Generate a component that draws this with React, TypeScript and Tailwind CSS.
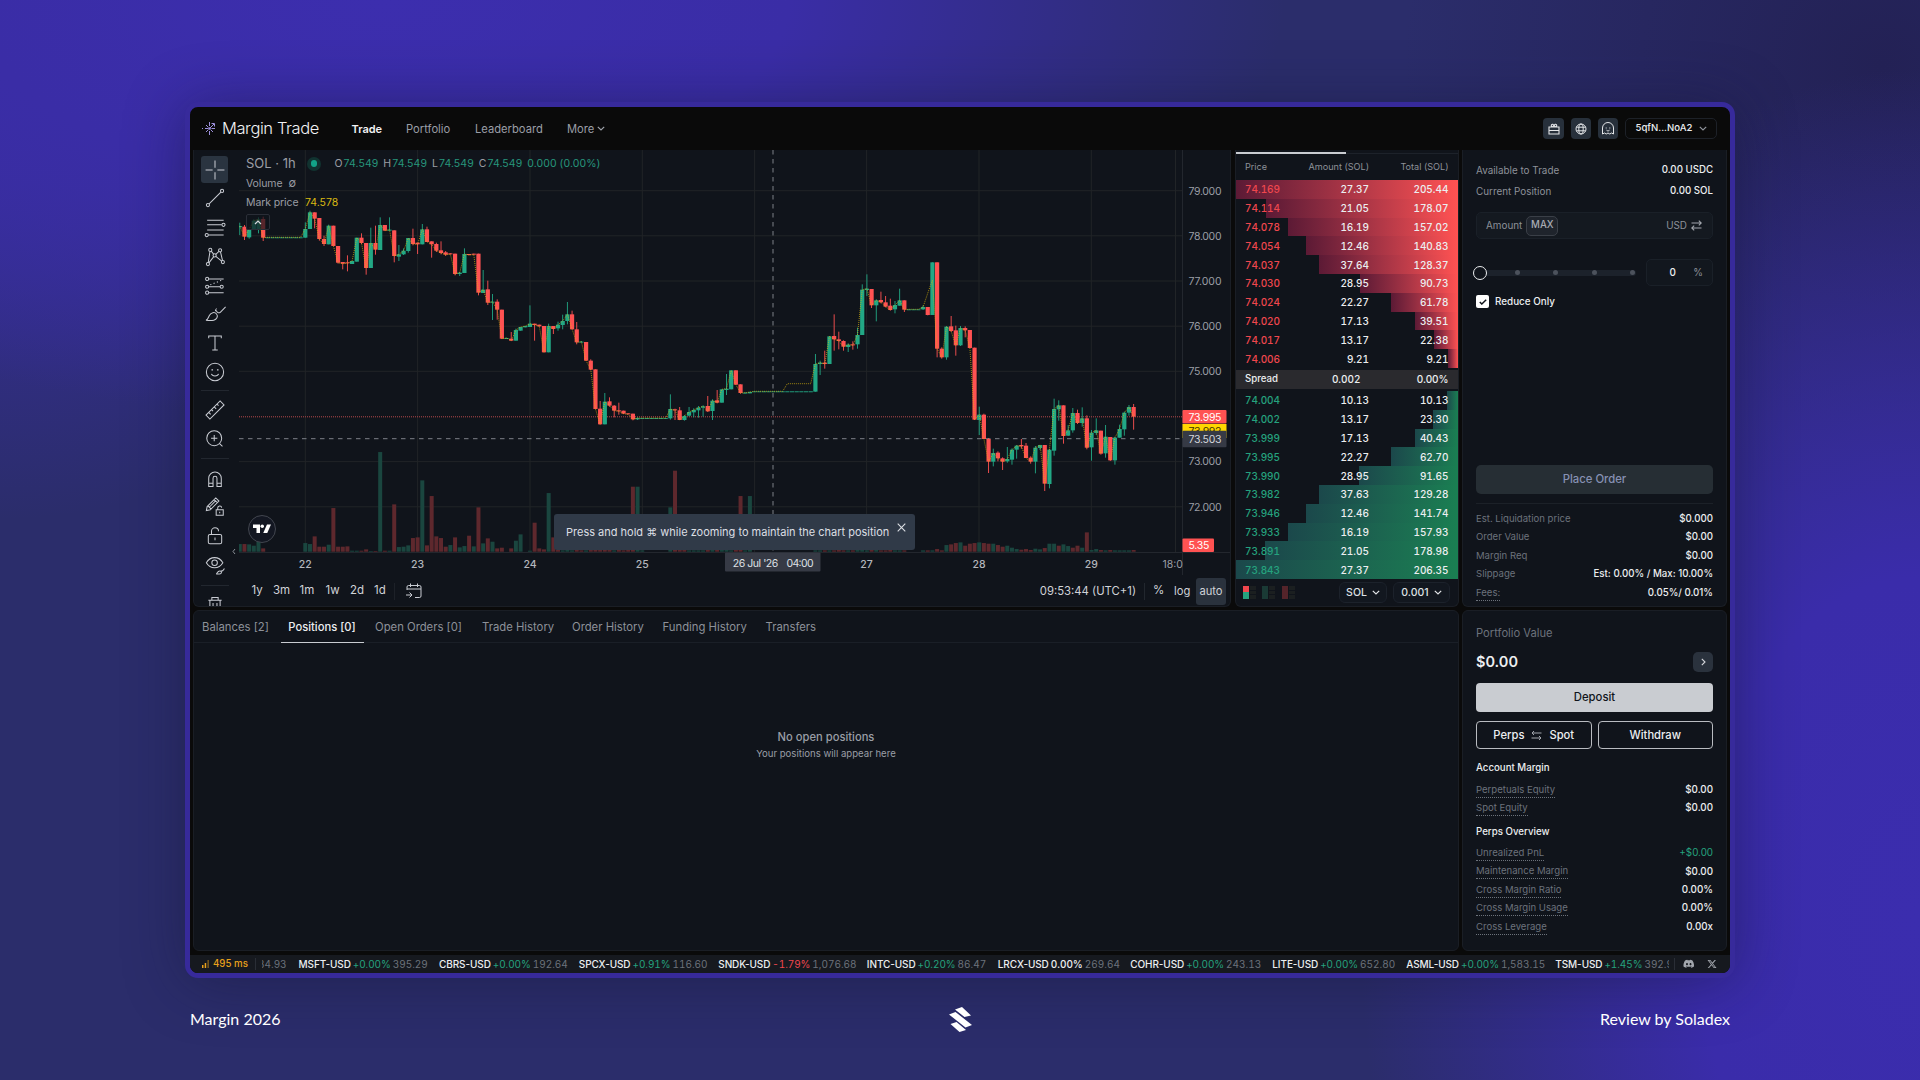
import type { ReactNode } from "react";
import { FaDiscord, FaXTwitter } from "react-icons/fa6";

// [open, close, high, low] as plot heights in thirds of a pixel, one entry per hour
type Bar = [number, number, number, number];

const PLOT_X = 66.3;
const STEP = 4.68;
const FIRST_SLOT = -14;

const flat = (y: number, count: number): Bar[] =>
  Array.from({ length: count }, () => [y, y, y, y] as Bar);

const shift = (bars: Bar[], by: number): Bar[] =>
  bars.map((b) => b.map((v) => v + by) as Bar);

const earlyBars: Bar[] = [
  [112, 108, 98, 135], [110, 140, 105, 150], [142, 118, 118, 146], [118, 92, 88, 118],
  [118, 88, 82, 130], [87, 143, 80, 153], ...flat(142, 8),
  [143, 117, 97, 143], [117, 67, 62, 117], [67, 86, 67, 115], [84, 147, 84, 152],
  [147, 162, 137, 168], [163, 107, 104, 163], [107, 168, 107, 168], [168, 218, 168, 221],
  [216, 221, 216, 238], [217, 220, 196, 244], [222, 213, 213, 222], [215, 143, 143, 215],
  [143, 159, 130, 162], [159, 234, 159, 254], [234, 159, 113, 234], [159, 179, 107, 194],
  [180, 105, 82, 180], [105, 122, 105, 122], [122, 119, 82, 122], [121, 198, 121, 217],
  [200, 193, 165, 213], [193, 182, 175, 195], [183, 144, 144, 188], [144, 162, 116, 166],
  [158, 163, 158, 192], [163, 118, 102, 163], [118, 156, 110, 156], [154, 163, 154, 203],
  [162, 182, 158, 186], [181, 189, 154, 193], [187, 194, 183, 198], [190, 193, 190, 193],
  [191, 252, 191, 256], [252, 248, 246, 258], [249, 192, 175, 249], [192, 195, 192, 196],
  [191, 194, 191, 195], [191, 308, 191, 316], [309, 299, 240, 309], [298, 338, 272, 345],
  [338, 335, 312, 390], [335, 359, 328, 389], [359, 446, 359, 447], [447, 444, 443, 447],
  [446, 452, 426, 453], [452, 420, 416, 452], [422, 411, 411, 422], [412, 408, 408, 412],
  [411, 401, 346, 411], [401, 405, 401, 452], [404, 409, 404, 410], [408, 487, 408, 487],
  [487, 408, 401, 487], [408, 417, 408, 432], [415, 404, 395, 422], [405, 393, 374, 418],
  [393, 373, 336, 403], [373, 418, 362, 418], [418, 457, 396, 463], [457, 455, 453, 457],
  [456, 512, 456, 513], [512, 539, 508, 541], [538, 657, 538, 658], [656, 703, 633, 703],
  [703, 635, 609, 703], [634, 647, 622, 650], [647, 662, 645, 682], [661, 664, 638, 674],
  [662, 671, 662, 672], [670, 673, 670, 673], [671, 688, 671, 691], [688, 684, 682, 690],
  ...flat(684, 6),
  [685, 657, 613, 689], [658, 661, 656, 690], [661, 690, 651, 690], [690, 678, 675, 692],
  [677, 666, 651, 679], [667, 660, 655, 682], [661, 653, 648, 683], [653, 649, 646, 680],
  [648, 664, 618, 666], [663, 632, 628, 690], [631, 638, 600, 640], [638, 598, 598, 638],
  [600, 596, 552, 615],
];

const lateBars: Bar[] = [
  [448, 391, 391, 448], [391, 434, 391, 434], [433, 459, 433, 461], [460, 458, 457, 460],
  [460, 456, 455, 460], ...flat(454, 13),
  [455, 372, 342, 455], [372, 368, 362, 405], [368, 372, 332, 386], [372, 289, 289, 372],
  [288, 298, 223, 332], [298, 303, 275, 328], [303, 320, 301, 332], [321, 314, 310, 336],
  [313, 316, 304, 329], [313, 285, 263, 326], [285, 149, 133, 285], [150, 146, 103, 168],
  [147, 196, 147, 204], [196, 181, 178, 244], [180, 187, 155, 190], [187, 200, 168, 202],
  [197, 210, 176, 212], [208, 195, 183, 220], [197, 181, 146, 197], [181, 209, 181, 216],
  ...flat(208, 3),
  [208, 201, 196, 210], [201, 225, 201, 226], [225, 67, 67, 225], [67, 326, 67, 352],
  [326, 352, 322, 356], [352, 260, 258, 359], [259, 273, 228, 276], [271, 316, 257, 347],
  [316, 264, 258, 318], [264, 271, 259, 292], [270, 324, 270, 324], [323, 539, 323, 540],
  [540, 524, 500, 585], [524, 597, 521, 597], [597, 665, 594, 699], [665, 639, 626, 679],
  [638, 655, 634, 664], [655, 665, 652, 690], [664, 657, 621, 668], [659, 629, 625, 674],
  [629, 617, 615, 656], [615, 619, 597, 626], [617, 654, 609, 654], [653, 665, 649, 671],
  [665, 623, 618, 700], [624, 615, 615, 630], [615, 731, 615, 753], [732, 629, 627, 745],
  [632, 507, 476, 647], [508, 496, 481, 542], [496, 588, 496, 611], [587, 571, 555, 588],
  [571, 519, 504, 578], [519, 549, 509, 552], [549, 535, 502, 560], [535, 623, 526, 628],
  [622, 578, 570, 662], [579, 571, 535, 585], [572, 641, 572, 644], [640, 590, 555, 653],
  [591, 661, 591, 663], [661, 593, 590, 674], [593, 567, 554, 593], [568, 518, 515, 587],
  [518, 501, 495, 527], [501, 530, 492, 569],
];

const bars = [...shift(earlyBars, 120), ...shift(lateBars, 270)];

// bar heights, negative on a down hour
const volumes = [
  23, -23, 22, 18, 30, -10, 0, 0, 0, 0, 0, 0, 0, 0,
  26, 23, -46, -15, -15, 21, -131, -15, -15, -16, 3, 3, -3, -7, 2, -2, 299, -3, 3, -142,
  14, 15, 19, -41, -43, 214, -19, -167, -46, -41, -15, 20, -43, 13, 17, -48, 16, -133, 25,
  -40, 30, -10, -12, 0, -10, 33, 52, 0, 3, -87, -10, -7, 176, -43, -5, 4, 5, 4, -5, -4, 4,
  -5, -6, -5, -8, -5, 4, -5, -4, -5, -195, 195, 4, 0, 0, 0, 0, 0, 133, -243, -5, -5, 4, 4,
  4, 4, -5, 5, -5, 5, 5, 4, -5, -167, 4, 167, 0, 0, 0, 0, 0, 0, 0, 0, 0, 0, 0, 0, 0, 4, 4,
  -4, 4, -4, -5, -4, 4, -4, 5, 5, 4, -5, 5, -4, -4, -5, 4, 4, -4, 0, 0, 0, 4, -4, 4, -8,
  -4, 20, -22, -26, 28, -18, -24, -26, 28, -26, -24, 24, -20, -15, 18, 12, 8, -6, -8, -5,
  9, 7, -11, 24, 24, -18, 22, 17, -12, -18, 12, -58, 5, 8, -5, 4, -5, 4, 4, 4, 4, -5,
];

const barX = (i: number) => PLOT_X + (i + FIRST_SLOT) * STEP;

const markPath = bars
  .map((b, i) => {
    const slot = i + FIRST_SLOT;
    let y = b[1];
    if (slot >= 103 && slot <= 108) y = 701;
    if (slot === 133) y = 430;
    if (slot === 134) y = 390;
    return `${i ? "L" : "M"}${barX(i).toFixed(1)} ${(y / 3).toFixed(1)}`;
  })
  .join("");

const priceTicks = [
  { label: "79.000", y: 40.7 },
  { label: "78.000", y: 85.8 },
  { label: "77.000", y: 131 },
  { label: "76.000", y: 176.2 },
  { label: "75.000", y: 221.3 },
  { label: "73.000", y: 311.6 },
  { label: "72.000", y: 356.8 },
];

const dayTicks = [
  { label: "22", x: 66.3 },
  { label: "23", x: 178.6 },
  { label: "24", x: 291 },
  { label: "25", x: 403.3 },
  { label: "", x: 515.6 },
  { label: "27", x: 627.6 },
  { label: "28", x: 740 },
  { label: "29", x: 852.3 },
];

const asks = [
  ["74.169", "27.37", "205.44"],
  ["74.114", "21.05", "178.07"],
  ["74.078", "16.19", "157.02"],
  ["74.054", "12.46", "140.83"],
  ["74.037", "37.64", "128.37"],
  ["74.030", "28.95", "90.73"],
  ["74.024", "22.27", "61.78"],
  ["74.020", "17.13", "39.51"],
  ["74.017", "13.17", "22.38"],
  ["74.006", "9.21", "9.21"],
];

const bids = [
  ["74.004", "10.13", "10.13"],
  ["74.002", "13.17", "23.30"],
  ["73.999", "17.13", "40.43"],
  ["73.995", "22.27", "62.70"],
  ["73.990", "28.95", "91.65"],
  ["73.982", "37.63", "129.28"],
  ["73.946", "12.46", "141.74"],
  ["73.933", "16.19", "157.93"],
  ["73.891", "21.05", "178.98"],
  ["73.843", "27.37", "206.35"],
];

const tickers = [
  { name: "MSFT-USD", change: "+0.00%", price: "395.29", width: "w-[140.500px]" },
  { name: "CBRS-USD", change: "+0.00%", price: "192.64", width: "w-[139.800px]" },
  { name: "SPCX-USD", change: "+0.91%", price: "116.60", width: "w-[139.500px]" },
  { name: "SNDK-USD", change: "-1.79%", price: "1,076.68", width: "w-[148.500px]" },
  { name: "INTC-USD", change: "+0.20%", price: "86.47", width: "w-[131px]" },
  { name: "LRCX-USD", change: "0.00%", price: "269.64", width: "w-[132.500px]" },
  { name: "COHR-USD", change: "+0.00%", price: "243.13", width: "w-[142px]" },
  { name: "LITE-USD", change: "+0.00%", price: "652.80", width: "w-[134px]" },
  { name: "ASML-USD", change: "+0.00%", price: "1,583.15", width: "w-[149px]" },
  { name: "TSM-USD", change: "+1.45%", price: "392.91", width: "w-[140px]" },
];

function ToolIcon({ children }: { children: ReactNode }) {
  return (
    <svg
      viewBox="0 0 28 28"
      className="h-[22px] w-[22px] shrink-0"
      fill="none"
      stroke="#c9ccd3"
      strokeWidth="1.3"
    >
      {children}
    </svg>
  );
}

function Tool({ children, className = "h-[29px]" }: { children: ReactNode; className?: string }) {
  return (
    <div className={`flex w-[27px] shrink-0 items-center justify-center ${className}`}>
      <ToolIcon>{children}</ToolIcon>
    </div>
  );
}

function DrawingTools() {
  return (
    <div className="flex h-full w-[45px] shrink-0 flex-col items-center overflow-hidden pt-[6px] pr-[4px]">
      <div className="flex h-[27px] w-[27px] shrink-0 items-center justify-center rounded-[3px] bg-[#2a3440]">
        <ToolIcon>
          <path d="M14 2v9M14 17v9M2 14h9M17 14h9" />
        </ToolIcon>
      </div>
      <Tool className="h-[30px]">
        <circle cx="5" cy="23" r="2" />
        <circle cx="23" cy="5" r="2" />
        <path d="M6.500 21.500l15-15" />
      </Tool>
      <Tool>
        <path d="M4 4h21M4 10h18.500M4 16.500h21M5.500 23h19.500" />
        <circle cx="24.800" cy="10" r="2" />
        <circle cx="3.500" cy="23" r="2" />
      </Tool>
      <Tool>
        <circle cx="5" cy="23" r="2" />
        <circle cx="8" cy="5" r="2" />
        <circle cx="13.500" cy="12" r="2" />
        <circle cx="20.500" cy="5.500" r="2" />
        <circle cx="24" cy="20.500" r="2" />
        <path d="M5.400 21L7.600 7M9.200 6.600l3 3.800M15 10.600l4-3.700M21 7.500l2.600 11M6.200 21.400l6-7.600M15 13.300l7.500 6" />
      </Tool>
      <Tool>
        <circle cx="4" cy="5" r="2" />
        <circle cx="4" cy="15" r="2" />
        <circle cx="4" cy="22.500" r="2" />
        <circle cx="22.500" cy="15" r="2" />
        <path d="M6 5h19M6 15h14.500M6 22.500h19" />
        <path d="M8 12.500L24 6" strokeDasharray="1.500 3" />
      </Tool>
      <Tool className="h-[28px]">
        <path d="M2.500 22c3-1 3-4 4.500-6.500 2-3.500 6.500-4.500 9-1.500 2.500 3.200 0 7-3.500 7.800-3 .7-7 .5-10 .2zM15.500 9.500c1 3.500 4 3.500 5.500 2L27.500 5M14.500 10.500c0-1.500.5-2.500 1.500-3.500" />
      </Tool>
      <Tool>
        <path d="M6 8V5h16v3M14 5v18M10.500 23h7" />
      </Tool>
      <Tool>
        <circle cx="14" cy="14" r="11" />
        <path d="M9.500 16.500c1 3.500 8 3.500 9 0" />
        <path d="M10.500 10.500v1.500M17.500 10.500v1.500" strokeWidth="2" />
      </Tool>
      <div className="my-[4px] h-px w-[28px] shrink-0 bg-[#22272f]" />
      <Tool className="h-[30px]">
        <path d="M2.500 20.500l18-18 5 5-18 18zM6 17l2.500 2.500M9.500 13.500L11.500 15.500M13 10l2.500 2.500M16.500 6.500L18.500 8.500" />
      </Tool>
      <Tool className="h-[28px]">
        <circle cx="13" cy="13" r="9.500" />
        <path d="M13 9v8M9 13h8M19.500 19.500l4 4" />
      </Tool>
      <div className="my-[5px] h-px w-[28px] shrink-0 bg-[#22272f]" />
      <Tool>
        <path d="M6 23.500V13a8 8 0 0 1 16 0v10.500h-5.500V13a2.500 2.500 0 0 0-5 0v10.500zM6 19.500h5.500M16.500 19.500H22" />
      </Tool>
      <Tool className="h-[28px]">
        <path d="M3 18.500l1-5 11-11 4 4-11 11zM13 4.500l4 4M5 12.500l4.200 4.200M7 14L15 6" />
        <path d="M15.500 17.500h9v7h-9zM17.500 17.500v-2a2.500 2.500 0 0 1 5-.5M20 20v2" />
      </Tool>
      <Tool className="h-[30px]">
        <rect x="5.500" y="12" width="17" height="12" rx="2" />
        <path d="M9.500 12V8a4.500 4.500 0 0 1 9 0M14 16v3.500" />
      </Tool>
      <Tool className="h-[28px]">
        <path d="M3 11C8 2.500 19 2.500 24 11 19 19.500 8 19.500 3 11z" />
        <circle cx="13.500" cy="11" r="3.500" />
        <path d="M15.500 25.500c1.500-.5 1.500-4 4.500-4s3 4-.5 4zM21.500 21c1 1.500 3 0 4.500-2.500" />
      </Tool>
      <div className="mt-[6px] mb-[8px] h-px w-[28px] shrink-0 bg-[#22272f]" />
      <Tool className="h-[22px]">
        <path d="M5.500 8h17M10 8V4.500h8V8M7.500 8v15h13V8M11.500 11.500v8M16.500 11.500v8" />
      </Tool>
    </div>
  );
}

function CandleChart() {
  return (
    <svg width="991" height="425" viewBox="0 0 991 425" className="block">
      <g stroke="#212427" strokeWidth="1">
        {priceTicks.map((t) => (
          <line key={t.label} x1="0" x2="943" y1={t.y} y2={t.y} />
        ))}
        {[...dayTicks, { label: "18", x: 936.5 }].map((t) => (
          <line key={t.x} x1={t.x} x2={t.x} y1="0" y2="402" />
        ))}
      </g>

      {volumes.map((v, i) => (
        <rect
          key={i}
          x={barX(i) - 2}
          y={401.7 - Math.abs(v) / 3}
          width="4"
          height={Math.abs(v) / 3}
          fill={v < 0 ? "#5e282d" : "#1a463f"}
        />
      ))}

      <line x1="0" x2="943" y1="266.800" y2="266.800" stroke="#b5484a" strokeDasharray="1 1" />
      <line x1="534" x2="534" y1="0" y2="402" stroke="#7d8088" strokeDasharray="4.500 4.500" />
      <line x1="0" x2="943" y1="288.700" y2="288.700" stroke="#7d8088" strokeDasharray="4.500 4.500" />

      {bars.map(([open, close, high, low], i) => {
        const fill = close <= open ? "#22a885" : "#ff5252";
        const top = Math.min(open, close) / 3;
        return (
          <g key={i} fill={fill}>
            <rect x={barX(i) - 0.45} y={high / 3} width="0.9" height={(low - high) / 3} />
            <rect
              x={barX(i) - 2.1}
              y={top}
              width="4.200"
              height={Math.max(0.9, Math.abs(open - close) / 3)}
            />
          </g>
        );
      })}
      <path d={markPath} fill="none" stroke="#d8b40e" strokeWidth="0.8" strokeDasharray="0.9 1.100" />

      <path d="M0 402.500H991M943.500 0V425" stroke="#23272e" />

      <g fill="#9b9ea5" fontSize="10.500" className="font-['Inter']">
        {priceTicks.map((t) => (
          <text key={t.label} x="949.500" y={t.y + 3.8} textLength="33">
            {t.label}
          </text>
        ))}
        {dayTicks.map((t) => (
          <text key={t.x} x={t.x} y="417.500" textAnchor="middle" fontWeight="500" fill="#b4b7bd">
            {t.label}
          </text>
        ))}
        <text x="923.500" y="417.500" fontSize="10.500">
          18:0
        </text>
      </g>

      <g fontSize="10.500" className="font-['Inter']">
        <rect x="943.500" y="274" width="44" height="14" fill="#ffd600" />
        <text x="949.500" y="285" textLength="33" fill="#3b3200">
          73.992
        </text>
        <rect x="943.500" y="260" width="44" height="13.500" rx="1" fill="#ff5252" />
        <text x="949.500" y="270.600" textLength="33" fill="#fff">
          73.995
        </text>
        <rect x="943.500" y="280.700" width="44" height="16.600" rx="1" fill="#363a45" />
        <text x="949.500" y="292.700" textLength="33" fill="#d5d7dc">
          73.503
        </text>
        <rect x="943.500" y="388.500" width="31.500" height="13.500" rx="1" fill="#ff5252" />
        <text x="949.500" y="399" textLength="21" fill="#fff">
          5.35
        </text>
        <rect x="486" y="402.500" width="95.500" height="19" rx="1" fill="#363a45" />
        <text x="493.800" y="417" textLength="45.500" fill="#dfe1e5">
          26 Jul '26
        </text>
        <text x="547.500" y="417" textLength="27" fill="#dfe1e5">
          04:00
        </text>
      </g>
    </svg>
  );
}

function ChartLegend() {
  return (
    <div className="absolute top-[5px] left-[7px] text-[#9b9ea5]">
      <div className="flex h-[17px] items-center">
        <span className="w-[61px] text-[13px]">SOL · 1h</span>
        <span className="flex h-[14px] w-[14px] items-center justify-center rounded-full bg-[#113330]">
          <span className="h-[6.500px] w-[6.500px] rounded-full bg-[#12a387]" />
        </span>
        <div className="ml-[13.500px] flex gap-[5px] text-[10.500px] tracking-[0.070px] text-[#27967b]">
          {["O", "H", "L", "C"].map((k) => (
            <span key={k}>
              <span className="mr-[1px] text-[#9b9ea5]">{k}</span>74.549
            </span>
          ))}
          <span>0.000 (0.00%)</span>
        </div>
      </div>
      <div className="mt-[3px] flex h-[17px] items-center gap-[6px] text-[10.500px] tracking-[-0.1px]">
        Volume <span className="text-[11px]">∅</span>
      </div>
      <div className="mt-[2px] flex h-[17px] items-center gap-[6.500px] text-[10.500px] tracking-[-0.1px]">
        Mark price <span className="tracking-normal text-[#d8b812]">74.578</span>
      </div>
      <div className="mt-[3px] flex h-[16px] w-[24px] items-center justify-center rounded-[2px] border border-[#2a2e37] bg-[#10141b]/70">
        <svg width="8" height="5" viewBox="0 0 8 5" fill="none" stroke="#d5d7dc" strokeWidth="1.200">
          <path d="M1 4l3-3 3 3" />
        </svg>
      </div>
    </div>
  );
}

function ChartPanel() {
  return (
    <section className="flex h-[457px] w-[1038px] overflow-hidden rounded-b-[6px] border border-t-0 border-[#1a1e25] bg-[#10141b]">
      <DrawingTools />
      <div className="relative flex min-w-0 flex-1 flex-col">
        <CandleChart />
        <ChartLegend />
        <div className="absolute top-[365px] left-[9px] flex h-[28px] w-[28px] items-center justify-center rounded-full border border-[#42464f] bg-[#131722]">
          <svg width="18" height="10" viewBox="0 0 36 20" fill="#fff">
            <path d="M0 1h14v17H7V8H0z" />
            <circle cx="18.500" cy="4.500" r="3.500" />
            <path d="M28 1h8l-7.500 17h-8z" />
          </svg>
        </div>
        <svg
          className="absolute top-[398px] left-[-7px]"
          width="4"
          height="7"
          viewBox="0 0 4 7"
          fill="none"
          stroke="#8b8f97"
        >
          <path d="M3 1L1 3.500 3 6" />
        </svg>
        <div className="absolute top-[364px] left-[315px] flex h-[36px] w-[361px] items-center rounded-[3px] bg-[#303a48] pl-[12px] text-[11px] text-[#dcdfe4]">
          <span className="whitespace-nowrap">
            Press and hold ⌘ while zooming to maintain the chart position
          </span>
          <svg
            className="absolute top-[9px] right-[9px]"
            width="9"
            height="9"
            viewBox="0 0 9 9"
            stroke="#dcdfe4"
            strokeWidth="1.100"
          >
            <path d="M.7.7l7.600 7.600M8.300.7L.7 8.300" />
          </svg>
        </div>

        <div className="flex h-[31px] items-center pt-px pr-[4px] pl-[12.500px] text-[11.500px] text-[#d0d3d8]">
          <span className="w-[21.500px]">1y</span>
          <span className="w-[26.500px]">3m</span>
          <span className="w-[26px]">1m</span>
          <span className="w-[24.500px]">1w</span>
          <span className="w-[24px]">2d</span>
          <span className="w-[20px]">1d</span>
          <span className="h-[17px] w-px bg-[#1d2128]" />
          <svg
            className="ml-[11px]"
            width="16"
            height="16"
            viewBox="0 0 16 16"
            fill="none"
            stroke="#c9ccd3"
            strokeWidth="1"
          >
            <path d="M1 7V4a1.500 1.500 0 0 1 1.500-1.500h11A1.500 1.500 0 0 1 15 4v9a1.500 1.500 0 0 1-1.500 1.500H9M1 6h14M4.500.5v3.500M11.500.5v3.500M0 12h6M3.500 9.500L6 12l-2.500 2.500" />
          </svg>
          <span className="ml-auto text-[11.300px] whitespace-nowrap">09:53:44 (UTC+1)</span>
          <span className="ml-[8px] h-[17px] w-px bg-[#22272e]" />
          <span className="ml-[8px] w-[21px]">%</span>
          <span className="w-[22px] text-[11.200px]">log</span>
          <span className="flex h-[27px] w-[30px] items-center justify-center rounded-[3px] bg-[#2a323d] text-[11.200px]">
            auto
          </span>
        </div>
      </div>
    </section>
  );
}

function DepthRow({ row, max, side }: { row: string[]; max: number; side: "ask" | "bid" }) {
  const width = (Number(row[2]) / max) * 100;
  return (
    <div className="relative h-[18.800px]">
      <div
        className={
          side === "ask"
            ? "absolute inset-y-0 right-0 bg-linear-to-r from-[#5c1a35] to-[#ff5252]"
            : "absolute inset-y-0 right-0 bg-linear-to-r from-[#1b484b] to-[#1a7f52]"
        }
        style={{ width: `${width}%` }}
      />
      <div className="relative flex h-full items-center pt-px pr-[9.500px] pl-[9px] text-[10px] font-medium text-[#eceef0] tabular-nums">
        <span className={side === "ask" ? "w-[54px] text-[#f0474e]" : "w-[54px] text-[#25a27e]"}>
          {row[0]}
        </span>
        <span className="w-[70px] text-right">{row[1]}</span>
        <span className="flex-1 text-right">{row[2]}</span>
      </div>
    </div>
  );
}

function ChevronDown({ className }: { className?: string }) {
  return (
    <svg
      className={className}
      width="8"
      height="5"
      viewBox="0 0 8 5"
      fill="none"
      stroke="currentColor"
      strokeWidth="1.200"
    >
      <path d="M.8.8L4 4 7.200.8" />
    </svg>
  );
}

function BookGlyph({ left, leftAlt }: { left: string; leftAlt: string }) {
  return (
    <div className="flex h-[13px] w-[13px] gap-px">
      <div className="flex flex-1 flex-col">
        <div className={`flex-1 ${left}`} />
        <div className={`flex-1 ${leftAlt}`} />
      </div>
      <div className="flex flex-1 flex-col gap-px">
        <div className="flex-1 bg-[#1b1f20]" />
        <div className="flex-1 bg-[#1b1f20]" />
        <div className="flex-1 bg-[#1b1f20]" />
      </div>
    </div>
  );
}

function OrderBook() {
  return (
    <section className="flex h-[457px] w-[224px] flex-col overflow-hidden rounded-b-[6px] border border-t-0 border-[#1a1e25] bg-[#10141b]">
      <div className="mt-[2px] h-[2px] border-b border-[#1d222a]">
        <div className="h-[2px] w-[110px] bg-[#c9ccd1]" />
      </div>
      <div className="flex h-[26px] items-center pr-[9.500px] pl-[9px] text-[9.100px] text-[#8d9199]">
        <span className="w-[54px]">Price</span>
        <span className="w-[70px] text-right">Amount (SOL)</span>
        <span className="flex-1 text-right">Total (SOL)</span>
      </div>
      {asks.map((row) => (
        <DepthRow key={row[0]} row={row} max={205.44} side="ask" />
      ))}
      <div className="mt-[2px] mb-[1.500px] flex h-[19.500px] items-center bg-[#2a2a2e] pr-[9.500px] pl-[9px] text-[10px] font-medium text-[#eceef0]">
        <span className="w-[54px] text-[9.700px]">Spread</span>
        <span className="w-[61.500px] text-right tabular-nums">0.002</span>
        <span className="flex-1 text-right">0.00%</span>
      </div>
      {bids.map((row) => (
        <DepthRow key={row[0]} row={row} max={206.35} side="bid" />
      ))}
      <div className="flex flex-1 items-center pr-[8px] pl-[7px] text-[10.500px] font-medium text-[#dfe1e4]">
        <BookGlyph left="bg-[#f0474e]" leftAlt="bg-[#25a27e]" />
        <div className="ml-[6px]">
          <BookGlyph left="bg-[#1a3a35]" leftAlt="bg-[#1a3a35]" />
        </div>
        <div className="ml-[7px]">
          <BookGlyph left="bg-[#54242a]" leftAlt="bg-[#54242a]" />
        </div>
        <div className="ml-auto flex h-[21px] w-[48px] items-center justify-center gap-[5px] rounded-[6px] border border-[#1c222b] bg-[#12171f]">
          SOL <ChevronDown />
        </div>
        <div className="ml-[6px] flex h-[21px] w-[57px] items-center justify-center gap-[5px] rounded-[6px] border border-[#1c222b] bg-[#12171f]">
          0.001 <ChevronDown />
        </div>
      </div>
    </section>
  );
}

function OrderForm() {
  const summary = [
    ["Est. Liquidation price", "$0.000"],
    ["Order Value", "$0.00"],
    ["Margin Req", "$0.00"],
    ["Slippage", "Est: 0.00% / Max: 10.00%"],
    ["Fees:", "0.05%/ 0.01%"],
  ];
  return (
    <section className="flex h-[457px] w-[265px] flex-col rounded-b-[6px] border border-t-0 border-[#1a1e25] bg-[#10141b] px-[13px] text-[9.900px] text-[#8d9199]">
      <div className="mt-[9px] flex h-[22px] items-center justify-between">
        Available to Trade <span className="text-[9.700px] font-medium text-[#eceef0]">0.00 USDC</span>
      </div>
      <div className="flex h-[21px] items-center justify-between">
        Current Position <span className="text-[9.700px] font-medium text-[#eceef0]">0.00 SOL</span>
      </div>
      <div className="mt-[10px] flex h-[27px] items-center rounded-[5px] border border-[#1a2028] bg-[#141920] pr-[10px] pl-[9px]">
        Amount
        <span className="ml-[4px] flex h-[20px] w-[32px] items-center justify-center rounded-[5px] border border-[#3a3f47] bg-[#1f242c] text-[9.700px] font-medium text-[#a7abb3]">
          MAX
        </span>
        <span className="ml-auto">USD</span>
        <svg
          className="ml-[4px]"
          width="11"
          height="11"
          viewBox="0 0 11 11"
          fill="none"
          stroke="#a2a6ad"
          strokeWidth="1.100"
        >
          <path d="M.5 3h9.500M7.800.6L10.300 3 7.800 5.400M10.500 8H1M3.200 5.600L.7 8l2.500 2.400" />
        </svg>
      </div>
      <div className="mt-[20px] flex h-[27px] items-center justify-between">
        <div className="relative h-[6px] w-[160px] rounded-full bg-[#1c222b]">
          <div className="flex h-full items-center justify-between pr-[1px] pl-[39px]">
            <span className="h-[5px] w-[5px] rounded-full bg-[#4c525c]" />
            <span className="h-[5px] w-[5px] rounded-full bg-[#4c525c]" />
            <span className="h-[5px] w-[5px] rounded-full bg-[#4c525c]" />
            <span className="h-[5px] w-[5px] rounded-full bg-[#4c525c]" />
          </div>
          <span className="absolute top-[-4px] left-[-3.500px] h-[14px] w-[14px] rounded-full border-[1.500px] border-[#eceef0] bg-[#10141b]" />
        </div>
        <div className="flex h-[27px] w-[67px] items-center rounded-[5px] border border-[#1a2028] bg-[#12171e] pr-[9px]">
          <span className="w-[53px] pl-[5px] text-center font-medium text-[#eceef0]">0</span>
          <span>%</span>
        </div>
      </div>
      <div className="mt-[9px] flex h-[13px] items-center gap-[6px] text-[9.900px] font-medium text-[#eceef0]">
        <span className="flex h-[13px] w-[13px] items-center justify-center rounded-[2px] bg-white">
          <svg width="8" height="6" viewBox="0 0 8 6" fill="none" stroke="#10141b" strokeWidth="1.500">
            <path d="M.8 3l2 2L7.200.8" />
          </svg>
        </span>
        Reduce Only
      </div>
      <button className="mt-auto h-[29px] rounded-[5px] bg-[#262e34] text-[11.300px] font-medium text-[#8791b3]">
        Place Order
      </button>
      <div className="mt-[9px] h-px shrink-0 bg-[#1c2128]" />
      <div className="mt-[6px] mb-[4px] shrink-0 text-[9.550px]">
        {summary.map(([label, value]) => (
          <div
            key={label}
            className="flex h-[18.400px] items-center justify-between text-[#6c727b]"
          >
            <span
              className={
                label === "Fees:" ? "mt-px border-b border-dotted border-[#6c727b] leading-[14px]" : ""
              }
            >
              {label}
            </span>
            <span className="text-[9.700px] font-medium text-[#eceef0]">{value}</span>
          </div>
        ))}
      </div>
    </section>
  );
}

function PositionsPanel() {
  const tabs = [
    { label: "Balances [2]", width: "w-[86.500px]" },
    { label: "Positions [0]", width: "w-[86.500px]" },
    { label: "Open Orders [0]", width: "w-[107px]" },
    { label: "Trade History", width: "w-[90px]" },
    { label: "Order History", width: "w-[90.500px]" },
    { label: "Funding History", width: "w-[103px]" },
    { label: "Transfers", width: "w-[60px]" },
  ];
  return (
    <section className="h-[341px] w-[1266px] rounded-[6px] border border-[#1a1e25] bg-[#10141b]">
      <div className="flex h-[32px] border-b border-[#1a1f27] pl-[8px] text-[11.300px] text-[#8d9199]">
        {tabs.map((tab) => (
          <div key={tab.label} className={`flex shrink-0 items-center pt-px ${tab.width}`}>
            {tab.label === "Positions [0]" ? (
              <span className="-ml-[8px] flex h-[31px] w-[83px] items-center justify-center border-b-[1.500px] border-[#c9ccd1] pt-[2px] text-[11.200px] font-medium text-[#eceef0]">
                {tab.label}
              </span>
            ) : (
              tab.label
            )}
          </div>
        ))}
      </div>
      <div className="mt-[86px] flex flex-col items-center text-[#9a9ea6]">
        <div className="text-[11.200px] leading-[17px] font-medium">No open positions</div>
        <div className="text-[9.600px] leading-[16px]">Your positions will appear here</div>
      </div>
    </section>
  );
}

function StatRow({ label, value, up }: { label: string; value: string; up?: boolean }) {
  return (
    <div className="flex h-[18.400px] items-center justify-between text-[9.550px]">
      <span className="border-b border-dotted border-[#6c727b] leading-[14px] text-[#6c727b]">
        {label}
      </span>
      <span
        className={
          up ? "text-[9.800px] text-[#25a27e]" : "text-[9.800px] font-medium text-[#eceef0]"
        }
      >
        {value}
      </span>
    </div>
  );
}

function PortfolioPanel() {
  return (
    <section className="h-[341px] w-[265px] rounded-[6px] border border-[#1a1e25] bg-[#10141b] px-[13px] text-[#eceef0]">
      <div className="mt-[11.500px] h-[20px] text-[11.200px] leading-[20px] text-[#6c727b]">
        Portfolio Value
      </div>
      <div className="mt-[9.500px] flex h-[20px] items-center justify-between">
        <span className="text-[14.500px] font-semibold">$0.00</span>
        <span className="flex h-[20px] w-[20px] items-center justify-center rounded-[5px] bg-[#2a323d]">
          <svg width="5" height="8" viewBox="0 0 5 8" fill="none" stroke="#d5d7dc" strokeWidth="1.100">
            <path d="M.8.8L4 4 .8 7.200" />
          </svg>
        </span>
      </div>
      <button className="mt-[11px] h-[29px] w-full rounded-[4px] bg-[#c9ccd1] text-[11.300px] font-medium text-[#10141b]">
        Deposit
      </button>
      <div className="mt-[9px] flex gap-[6px] text-[11.200px] font-medium">
        <button className="flex h-[28px] flex-1 items-center justify-center gap-[7px] rounded-[4px] border border-[#b9bcc1]">
          Perps
          <svg width="11" height="9" viewBox="0 0 11 9" fill="none" stroke="#a2a6ad">
            <path d="M10.500 2H1M3 0L1 2l2 2M.5 7H10M8 5l2 2-2 2" />
          </svg>
          Spot
        </button>
        <button className="h-[28px] flex-1 rounded-[4px] border border-[#b9bcc1]">Withdraw</button>
      </div>
      <div className="mt-[11px] mb-[5px] h-[16px] text-[9.700px] leading-[16px] font-medium">
        Account Margin
      </div>
      <StatRow label="Perpetuals Equity" value="$0.00" />
      <StatRow label="Spot Equity" value="$0.00" />
      <div className="mt-[6px] mb-[4.500px] h-[16px] text-[9.700px] leading-[16px] font-medium">
        Perps Overview
      </div>
      <StatRow label="Unrealized PnL" value="+$0.00" up />
      <StatRow label="Maintenance Margin" value="$0.00" />
      <StatRow label="Cross Margin Ratio" value="0.00%" />
      <StatRow label="Cross Margin Usage" value="0.00%" />
      <StatRow label="Cross Leverage" value="0.00x" />
    </section>
  );
}

function Header() {
  return (
    <header className="flex h-[43px] shrink-0 items-center pr-[13px] pl-[12px] text-[11.200px] text-[#9a9ea6]">
      <svg width="14" height="15" viewBox="0 0 14 15" stroke="#9d90dd" strokeWidth="1" fill="none">
        <path d="M7.500 1v4M7.500 10v4M9.500 7.500H13M3 7.500h3M4 4l2.500 2.500M4 11l2.500-2.500M11 11L8.500 8.500M8 7l4-4M9.500 2.500h3v3M0 7.500h1" />
        <circle cx="7.500" cy="7.500" r="0.800" fill="#9d90dd" />
      </svg>
      <span className="ml-[6px] w-[129.500px] pb-px text-[16.500px] font-light tracking-[-0.4px] text-[#f2f3f5]">
        Margin Trade
      </span>
      <span className="w-[54.500px] pt-px text-[11px] font-semibold text-[#f2f3f5]">Trade</span>
      <span className="w-[69px] pt-px">Portfolio</span>
      <span className="w-[92px] pt-px">Leaderboard</span>
      <span className="pt-px">More</span>
      <ChevronDown className="ml-[3px]" />

      <div className="ml-auto flex items-center">
        <span className="flex h-[21px] w-[21px] items-center justify-center rounded-[4px] bg-[#27303b]">
          <svg width="12" height="12" viewBox="0 0 12 12" fill="none" stroke="#e3e5e8" strokeWidth="1.100">
            <path d="M1 4h10v7H1zM1 7.500h10M6 4C4.500 4 3 3.500 3.300 2.200 3.700.6 6 1 6 4zM6 4c1.500 0 3-.5 2.700-1.800C8.300.6 6 1 6 4z" />
          </svg>
        </span>
        <span className="ml-[7px] flex h-[21px] w-[20px] items-center justify-center rounded-[4px] bg-[#27303b]">
          <svg width="12" height="12" viewBox="0 0 12 12" fill="none" stroke="#e3e5e8" strokeWidth="1">
            <circle cx="6" cy="6" r="5" />
            <ellipse cx="6" cy="6" rx="2.200" ry="5" />
            <path d="M1.500 4.200h9M1.500 7.800h9" />
          </svg>
        </span>
        <span className="ml-[7px] flex h-[21px] w-[20px] items-center justify-center rounded-[4px] bg-[#27303b]">
          <svg width="14" height="13" viewBox="0 0 14 13" fill="none" stroke="#e3e5e8" strokeWidth="1">
            <path d="M1.500 12V6a5.500 5.500 0 0 1 11 0v6l-2-1-1.700 1L7 11l-1.800 1-1.700-1z" />
            <path d="M5.200 5.500v1M8.800 5.500v1M5.500 8.200c.8.900 2.200.9 3 0" />
          </svg>
        </span>
        <span className="ml-[7px] flex h-[21px] w-[92px] items-center rounded-[5px] border border-[#1d2128] pr-[9px] pl-[9.500px] text-[9.600px] font-medium text-[#eceef0]">
          5qfN...NoA2
          <ChevronDown className="ml-auto text-[#8d9199]" />
        </span>
      </div>
    </header>
  );
}

function TickerBar() {
  return (
    <footer className="flex h-[18px] shrink-0 items-center bg-[#16191f] pr-[13px] pl-[12px] text-[10px]">
      <svg width="8" height="8" viewBox="0 0 8 8" fill="#e9a11b">
        <rect x="0" y="5" width="1.500" height="3" />
        <rect x="2.700" y="3" width="1.500" height="5" />
        <rect x="5.400" y="0" width="1.500" height="8" fill="#7a5a1c" />
      </svg>
      <span className="ml-[3px] w-[42px] text-[9.700px] font-medium whitespace-nowrap text-[#e9a11b]">
        495 ms
      </span>
      <span className="h-[12px] w-px bg-[#2a2e36]" />
      <div className="ml-[6px] flex h-full w-[1407px] items-center overflow-hidden whitespace-nowrap text-[#6c727b] tabular-nums">
        <span className="-ml-[10.500px] w-[47px] shrink-0">184.93</span>
        {tickers.map((t) => (
          <span key={t.name} className={`flex shrink-0 gap-[2px] ${t.width}`}>
            <span className="font-medium tracking-[-0.1px] text-[#eceef0] normal-nums">{t.name}</span>
            <span
              className={
                t.change[0] === "+"
                  ? "tracking-[-0.080px] text-[#25a27e]"
                  : t.change[0] === "-"
                    ? "tracking-[-0.080px] text-[#f0474e]"
                    : "font-medium text-[#eceef0]"
              }
            >
              {t.change}
            </span>
            <span>{t.price}</span>
          </span>
        ))}
      </div>
      <span className="ml-[5px] h-[12px] w-px bg-[#2a2e36]" />
      <FaDiscord className="ml-auto text-[11.500px] text-[#a2a6ad]" />
      <FaXTwitter className="ml-[13px] text-[10px] text-[#a2a6ad]" />
    </footer>
  );
}

export default function App() {
  return (
    <div className="flex h-[1080px] w-[1920px] flex-col items-center overflow-hidden bg-[#2b2d6b] bg-[radial-gradient(ellipse_900px_420px_at_20%_0%,#3c2eae_0%,#3a2da6_45%,transparent_100%),radial-gradient(ellipse_500px_520px_at_0%_0%,#3c2eae_0%,transparent_100%),radial-gradient(ellipse_560px_850px_at_100%_85%,#3b2dae_0%,#3a2caa_40%,transparent_100%),radial-gradient(ellipse_480px_480px_at_98%_6%,#232155_0%,transparent_100%)] pt-[102px] font-['Inter',sans-serif] text-white">
      <div className="flex h-[876px] w-[1550px] shrink-0 flex-col overflow-hidden rounded-[13px] border-[5px] border-[#372a9b] bg-[#0a0a0a] shadow-[0_4px_60px_rgba(20,20,50,0.450)]">
        <Header />
        <div className="flex shrink-0 pl-[3px]">
          <ChartPanel />
          <div className="w-[4px]" />
          <OrderBook />
          <div className="w-[3px]" />
          <OrderForm />
        </div>
        <div className="mt-[3px] mb-[4px] flex shrink-0 gap-[3px] pl-[3px]">
          <PositionsPanel />
          <PortfolioPanel />
        </div>
        <TickerBar />
      </div>
      <div className="mt-[28px] flex w-[1540px] items-center justify-between font-['Lato',sans-serif] text-[16px] leading-[26px]">
        <span className="flex-1">Margin 2026</span>
        <svg width="23" height="25" viewBox="0 0 23 25" fill="#fff">
          <path d="M6 2.500L13 0l9 8.500-6.500 1.500zM0 7.500L6.500 5 23 18l-6.500 2.500zM1.500 17l6-2 9.500 8-6.500 2z" />
        </svg>
        <span className="flex-1 text-right">Review by Soladex</span>
      </div>
    </div>
  );
}
